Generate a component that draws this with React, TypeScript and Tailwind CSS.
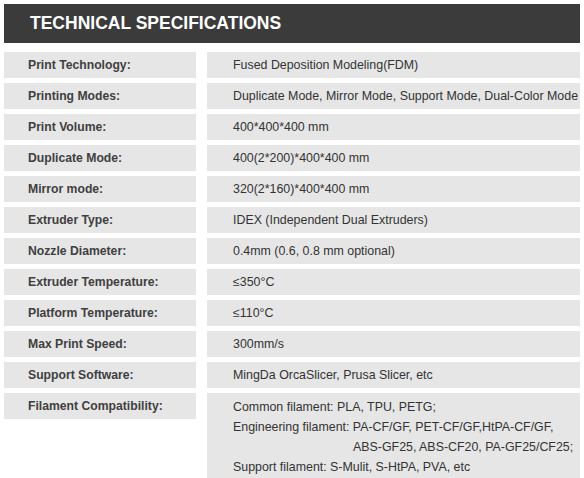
export default function App() {
  const specs: { label: string; value: React.ReactNode }[] = [
    { label: "Print Technology:", value: "Fused Deposition Modeling(FDM)" },
    { label: "Printing Modes:", value: "Duplicate Mode, Mirror Mode, Support Mode, Dual-Color Mode" },
    { label: "Print Volume:", value: "400*400*400 mm" },
    { label: "Duplicate Mode:", value: "400(2*200)*400*400 mm" },
    { label: "Mirror mode:", value: "320(2*160)*400*400 mm" },
    { label: "Extruder Type:", value: "IDEX (Independent Dual Extruders)" },
    { label: "Nozzle Diameter:", value: "0.4mm (0.6, 0.8 mm optional)" },
    { label: "Extruder Temperature:", value: "≤350°C" },
    { label: "Platform Temperature:", value: "≤110°C" },
    { label: "Max Print Speed:", value: "300mm/s" },
    { label: "Support Software:", value: "MingDa OrcaSlicer, Prusa Slicer, etc" },
  ];

  return (
    <div className="w-[584px] h-[478px] bg-white pt-1 pl-1 overflow-hidden" style={{ fontFamily: '"Liberation Sans", Arial, sans-serif' }}>
      {/* Header */}
      <div className="w-[576px] h-[39px] bg-[#3b3b3c] flex items-center pl-[26px]">
        <h2 className="text-white font-bold text-[17.5px]">TECHNICAL SPECIFICATIONS</h2>
      </div>

      {/* Rows */}
      <div className="mt-[9px] flex flex-col gap-[5px] w-[576px]">
        {specs.map((s) => (
          <div key={s.label} className="flex gap-[11px] h-[26px]">
            <div className="w-[192px] bg-[#e6e6e6] flex items-center pl-[24px] text-[12.2px] font-bold text-[#3f3f3f] whitespace-nowrap">
              {s.label}
            </div>
            <div className="flex-1 bg-[#e6e6e6] flex items-center pl-[26px] text-[12.4px] text-[#333] whitespace-nowrap">
              {s.value}
            </div>
          </div>
        ))}

        {/* Filament Compatibility */}
        <div className="flex gap-[11px] items-start">
          <div className="w-[192px] h-[26px] bg-[#e6e6e6] flex items-center pl-[24px] text-[12.2px] font-bold text-[#3f3f3f] whitespace-nowrap">
            Filament Compatibility:
          </div>
          <div className="flex-1 bg-[#e6e6e6] pl-[26px] pt-[4px] pb-[2px] text-[12.4px] leading-[20px] text-[#333] whitespace-nowrap">
            <p>Common filament: PLA, TPU, PETG;</p>
            <p>Engineering filament: PA-CF/GF, PET-CF/GF,HtPA-CF/GF,</p>
            <p className="pl-[120px]">ABS-GF25, ABS-CF20, PA-GF25/CF25;</p>
            <p>Support filament: S-Mulit, S-HtPA, PVA, etc</p>
          </div>
        </div>
      </div>
    </div>
  );
}
